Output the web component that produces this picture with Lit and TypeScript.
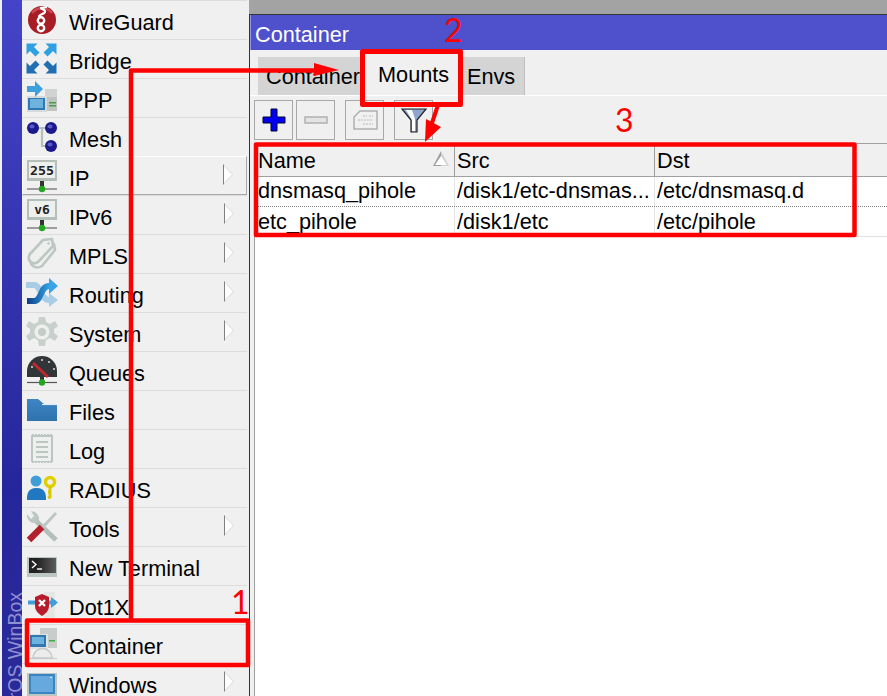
import { LitElement, html, css, svg } from "lit";
import { customElement } from "lit/decorators.js";

const bridgeQ = svg`<path d="M1.500 1.500h11l-3.500 3.500 5.500 5.500-4 4L5 9l-3.500 3.500z"/>`;

const I: Record<string, any> = {
  wg: svg`<circle cx="17" cy="17" r="14" fill="#a81c26"/><path d="M7 10a13 13 0 0 1 20 0" stroke="#cc4850" stroke-width="2.500" fill="none"/><circle cx="16" cy="17.500" r="3.200" fill="none" stroke="#fff" stroke-width="2.400"/><circle cx="16" cy="25" r="3.200" fill="none" stroke="#fff" stroke-width="2.400"/><path d="M14 14c0-3 7-3 6-6s-4-1-4-3l6-1" stroke="#fff" stroke-width="2.200" fill="none"/>`,
  bridge: svg`<g fill="#2fa0e2">${bridgeQ}<g transform="matrix(-1 0 0 1 33 0)">${bridgeQ}</g></g><g fill="#1f6fb2"><g transform="matrix(1 0 0 -1 0 33)">${bridgeQ}</g><g transform="matrix(-1 0 0 -1 33 33)">${bridgeQ}</g></g>`,
  ppp: svg`<rect x="20" y="8" width="12" height="8" fill="#d0d3d2"/><rect x="20" y="16" width="12" height="14" fill="#bfc4c2"/><rect x="24" y="21" width="7" height="1.500" fill="#4a9a4a"/><rect x="24" y="24" width="7" height="1.500" fill="#4a9a4a"/><rect x="2" y="15" width="20" height="16" fill="#d6dada"/><rect x="3" y="17" width="17" height="12" fill="#2f78b0"/><rect x="5" y="18" width="13" height="9" fill="#6eb2e0"/><path d="M2 5h8V0l8 8-8 8v-5H2z" fill="#3fa0dc"/>`,
  mesh: svg`<path d="M8 8h18M17 8v18h9" stroke="#b4bfbc" stroke-width="2.200" fill="none"/><g fill="#1a1a8c"><circle cx="8" cy="8" r="6"/><circle cx="26" cy="8" r="6"/><circle cx="26" cy="26" r="6"/></g><g fill="#5a5ac8"><ellipse cx="7" cy="6.500" rx="2.500" ry="2"/><ellipse cx="25" cy="6.500" rx="2.500" ry="2"/><ellipse cx="25" cy="24.500" rx="2.500" ry="2"/></g>`,
  ip: svg`<rect x="2" y="1" width="30" height="21" fill="#b4bfba"/><rect x="4" y="3" width="26" height="16" fill="#eef0ee"/><text x="17" y="15.500" text-anchor="middle" font-family="DejaVu Sans Mono" font-weight="700" font-size="13" textLength="24" lengthAdjust="spacingAndGlyphs" fill="#222">255</text><rect x="15" y="22" width="4" height="8" fill="#333"/><path d="M2 30h30" stroke="#666" stroke-width="1.200"/><circle cx="17" cy="30" r="3.200" fill="#22a81e"/>`,
  ipv6: svg`<rect x="2" y="1" width="30" height="21" fill="#b4bfba"/><rect x="4" y="3" width="26" height="16" fill="#eef0ee"/><text x="17" y="15.500" text-anchor="middle" font-family="DejaVu Sans Mono" font-weight="700" font-size="13" fill="#222">v6</text><rect x="15" y="22" width="4" height="8" fill="#333"/><path d="M2 30h30" stroke="#666" stroke-width="1.200"/><circle cx="17" cy="30" r="3.200" fill="#22a81e"/>`,
  mpls: svg`<g fill="#eef0ee" stroke="#bcc6c2" stroke-width="2.600" stroke-linejoin="round"><path d="M7 22 20 8l9-1 1 6-13 16q-5 3-9 0t-1-7z"/><path d="M5 17 18 3l9-1 1 7-14 15q-4 4-8 1t-1-8z"/></g><circle cx="23.500" cy="6.500" r="1.300" fill="#bcc6c2"/>`,
  routing: svg`<defs><linearGradient id="rg" x1="0" x2="1"><stop offset="0" stop-color="#0e3f86"/><stop offset="1" stop-color="#36a8ec"/></linearGradient></defs><path d="M1 9h8c7 0 6 15 15 15" stroke="#a9cde4" stroke-width="6" fill="none"/><path d="M24 17l9 7-9 7z" fill="#a9cde4"/><path d="M2 25h7c8 0 6-15 15-15h2" stroke="url(#rg)" stroke-width="6" fill="none"/><path d="M24 2l9 8-9 8z" fill="#3aa4e4"/>`,
  system: svg`<path d="M14 2h6l1 5 4 2 5-3 3 5-4 3v4l4 3-3 5-5-3-4 2-1 6h-6l-1-6-4-2-5 3-3-5 4-3v-4L1 11l3-5 5 3 4-2z" fill="#c8d0cc"/><circle cx="17" cy="17" r="7.500" fill="#eef0ee"/><circle cx="17" cy="17" r="4" fill="#c4ccc8"/>`,
  queues: svg`<path d="M2 23v-6a15 15 0 0 1 30 0v6z" fill="#333638"/><g fill="#ddd"><circle cx="7" cy="13" r="1"/><circle cx="17" cy="6" r="1"/><circle cx="24" cy="8" r="1"/><circle cx="29" cy="15" r="1"/></g><path d="M8 9l15 14" stroke="#c02830" stroke-width="3"/><rect x="15" y="23" width="4" height="5" fill="#333"/><path d="M2 28.500h30" stroke="#555" stroke-width="1.200"/><circle cx="17" cy="28.500" r="3.200" fill="#22a81e"/>`,
  files: svg`<defs><linearGradient id="fg" x1="0" x2="0" y1="0" y2="1"><stop offset="0" stop-color="#3d86c4"/><stop offset="1" stop-color="#2f72ac"/></linearGradient></defs><path d="M2 6h11l6 5h13v17H2z" fill="url(#fg)"/><path d="M17 11.500h15" stroke="#dcecf6" stroke-width="1.200"/>`,
  log: svg`<rect x="6" y="2" width="22" height="29" fill="#bcc6c2"/><rect x="8" y="5" width="18" height="24" fill="#eef0ee"/><path d="M6 2.500h22M6 30.500h22" stroke="#f0f0f0" stroke-width="1" stroke-dasharray="1 2"/><path d="M11 10h12M11 15h12M11 20h12M11 25h12" stroke="#bcc6c2" stroke-width="1.800"/>`,
  radius: svg`<circle cx="11" cy="10" r="5.500" fill="#3f9ed8"/><path d="M2 29c0-5 0-12 9.500-12s9.500 7 9.500 12z" fill="#1f78c0"/><circle cx="25" cy="11" r="4.500" fill="none" stroke="#e0d000" stroke-width="3.500"/><path d="M25 15v11l-2 1m2-6h-2" stroke="#d8c800" stroke-width="3" fill="none"/>`,
  tools: svg`<path d="M9 9 31 30" stroke="#b4bfba" stroke-width="5"/><path d="M2 4a8 8 0 0 0 9 9l3-3a8 8 0 0 0-8-9l3 5-3 3z" fill="#bcc6c2"/><path d="M31 3 17 18" stroke="#bcc6c2" stroke-width="3"/><path d="M17 17 4 30" stroke="#b4202c" stroke-width="6.500"/>`,
  term: svg`<defs><linearGradient id="tg" x1="0" x2="1"><stop offset="0.300" stop-color="#222"/><stop offset="1" stop-color="#5c5c5c"/></linearGradient></defs><rect x="2" y="8" width="30" height="20" fill="#bcc6c2"/><rect x="4" y="9" width="27" height="15" fill="url(#tg)"/><path d="M7 12l4 3.500-4 3.500" stroke="#fff" stroke-width="1.400" fill="none"/><path d="M12 20h5" stroke="#fff" stroke-width="1.400"/>`,
  dot1x: svg`<rect x="19" y="4" width="11" height="28" fill="#e4e6e4"/><path d="M3 12.500h28v4H3z" fill="#3f9ed8"/><path d="M26 9l7 5.500-7 5.500z" fill="#3f9ed8"/><path d="M10 9l7-3 7 3v9c0 5-4 8-7 10-3-2-7-5-7-10z" fill="#b81c2c"/><path d="M14 12l6 6M20 12l-6 6" stroke="#fff" stroke-width="2.400"/>`,
  container: svg`<rect x="15" y="1" width="17" height="20" fill="#c8cccb"/><rect x="4" y="7" width="19" height="15" fill="#dfe3e3"/><rect x="5" y="8" width="16" height="12" fill="#2f78b0"/><rect x="7" y="10" width="12" height="7" fill="#6eb2e0"/><rect x="24" y="13" width="6" height="1.500" fill="#3fae3f"/><path d="M2 31.500h30" stroke="#cfd3d2" stroke-width="1.500"/><path d="M8 31a9.500 9.500 0 0 1 19 0z" fill="#ececec" stroke="#c4c8c7" stroke-width="1.500"/>`,
  windows: svg`<rect x="2" y="7" width="30" height="26" fill="#bcc6c2"/><rect x="4" y="8" width="26" height="20" fill="#3a84c2"/><rect x="6" y="10" width="22" height="16" fill="#65a9de"/><circle cx="26" cy="11.500" r="0.800" fill="#fff"/>`,
};

const MENU: [string, string, boolean][] = [
  ["wg","WireGuard",false],["bridge","Bridge",false],["ppp","PPP",false],["mesh","Mesh",false],
  ["ip","IP",true],["ipv6","IPv6",true],["mpls","MPLS",true],["routing","Routing",true],
  ["system","System",true],["queues","Queues",false],["files","Files",false],["log","Log",false],
  ["radius","RADIUS",false],["tools","Tools",true],["term","New Terminal",false],["dot1x","Dot1X",false],
  ["container","Container",false],["windows","Windows",true],
];

@customElement("app-root")
export class AppRoot extends LitElement {
  static styles = css`
    :host { display: block; width: 887px; height: 696px; overflow: hidden; position: relative;
      font-family: "Liberation Sans", Arial, sans-serif; font-size: 21.7px; color: #000; background: #f0f0f0; }
    .page { display: flex; height: 696px; }
    .edge { width: 2px; background: #f0f0f0; flex: none; }
    .rail { width: 20px; flex: none; background: linear-gradient(#4444c8, #26269c 70%, #2a2a9a); position: relative; overflow: hidden; }
    .brand { position: absolute; left: 4px; bottom: -55px; writing-mode: vertical-rl; transform: rotate(180deg);
      color: #9090d0; font-size: 19.500px; line-height: 18px; white-space: nowrap; }
    .menu { width: 227px; flex: none; background: #f0f0f0; }
    .row { height: 39px; box-sizing: border-box; border-top: 1px solid #dcdcdc; margin-right: 2px; display: flex; align-items: center; position: relative; }
    .row.hover { border: 1px solid #a8a8a8; border-top-color: #fff; border-left-color: #fff; }
    .row svg { width: 34px; height: 34px; margin-left: 3px; flex: none; }
    .row span { margin-left: 10px; margin-top: 5px; }
    .row.hover span { margin-top: 7px; }
    .row.hover svg { margin-left: 2px; }
    .caret { position: absolute; right: 13px; top: 7px; width: 10px; height: 21px; }
    .caret::before { content: ""; position: absolute; inset: 0; background: linear-gradient(to right, #808080 1px, #d8d8d8 1px); clip-path: polygon(0 0, 100% 50%, 0 100%); }
    .caret::after { content: ""; position: absolute; left: 1px; top: 2px; width: 8px; height: 17px; background: #fff; clip-path: polygon(0 0, 100% 50%, 0 100%); }
    .main { flex: 1; min-width: 0; display: flex; flex-direction: column; }
    .desk { height: 15px; background: #a3a3a3; border-bottom: 1px solid #333; box-sizing: border-box; flex: none; }
    .win { flex: 1; display: flex; flex-direction: column; border-left: 1px solid #333; background: #f0f0f0; }
    .title { height: 35px; flex: none; background: #4f50cc; color: #fff; padding: 5px 0 0 4px; display: flex; align-items: center; box-sizing: border-box; border-left: 1px solid #9898e0; }
    .tabs { height: 46px; flex: none; display: flex; align-items: flex-end; padding-left: 8px; border-bottom: 1px solid #fff; box-sizing: border-box; }
    .tab { height: 38px; background: #d4d4d4; box-sizing: border-box; display: flex; align-items: center; border-right: 1px solid #c0c0c0; }
    .tab.a { width: 107px; padding-left: 8px; padding-top: 1px; }
    .tab.b { width: 96px; height: 45px; background: #f0f0f0; padding: 5px 0 0 13px; border: 0; }
    .tab.c { width: 64px; padding-left: 6px; padding-top: 1px; }
    .tools { height: 47px; flex: none; display: flex; gap: 3px; padding: 4px 0 0 4px; box-sizing: border-box; }
    .btn { width: 39px; height: 40px; box-sizing: border-box; border: 1px solid #a8a8a8; display: flex; align-items: center; justify-content: center; }
    .btn svg { width: 28px; height: 28px; }
    .btn.gap { margin-left: 7px; }
    .table { flex: 1; background: #fff; margin-left: 4px; display: flex; flex-direction: column; border-left: 1px solid #a0a0a0; }
    .tr { display: grid; grid-template-columns: 200px 200px 1fr; height: 30px; box-sizing: border-box; }
    .tr.head { height: 34px; background: #f0f0f0; border-top: 1px solid #a0a0a0; border-bottom: 1px solid #a0a0a0; }
    .tr.head div { border-right: 1px solid #a0a0a0; padding-top: 2px; }
    .tr.r1 { border-bottom: 1px dotted #808080; }
    .tr.r1 div { padding-bottom: 1px; }
    .tr.r2 { border-bottom: 1px solid #e0e0e0; }
    .tr div { padding-left: 2px; display: flex; align-items: center; white-space: nowrap; overflow: hidden; position: relative; border-right: 1px solid #e4e4e4; box-sizing: border-box; }
    .tr div:first-child { padding-left: 3px; }
    .tr div:last-child, .tr.head div:last-child { border-right: 0; }
    .sort { position: absolute; right: 5px; top: 7px; width: 16px; height: 15px; background: linear-gradient(to right, #a0a0a0 50%, #d0d0d0 50%); clip-path: polygon(50% 0, 100% 100%, 0 100%); }
    .sort::after { content: ""; position: absolute; left: 2px; top: 5px; width: 12px; height: 9px; background: #fff; clip-path: polygon(50% 0, 100% 100%, 0 100%); }
    .anno { position: absolute; inset: 0; pointer-events: none; }
    .anno svg { position: absolute; inset: 0; width: 887px; height: 696px; }
    .num { position: absolute; color: #f00; font-family: "Lato", sans-serif; font-size: 32px; line-height: 32px; }
    .n1 { left: 231px; top: 586px; }
    .n2 { left: 444px; top: 14px; }
    .n3 { left: 615px; top: 104px; }
  `;

  render() {
    return html`
      <div class="page">
        <div class="edge"></div>
        <div class="rail"><div class="brand">RouterOS WinBox</div></div>
        <div class="menu">
          ${MENU.map(([ic, label, sub]) => html`
            <div class="row ${label === "IP" ? "hover" : ""}">
              <svg viewBox="0 0 34 34">${I[ic]}</svg><span>${label}</span>
              ${sub ? html`<i class="caret"></i>` : ""}
            </div>`)}
        </div>
        <div class="main">
          <div class="desk"></div>
          <div class="win">
            <div class="title">Container</div>
            <div class="tabs">
              <div class="tab a">Container</div>
              <div class="tab b">Mounts</div>
              <div class="tab c">Envs</div>
            </div>
            <div class="tools">
              <div class="btn"><svg viewBox="0 0 28 28"><path d="M11 3h6v8h8v6h-8v8h-6v-8H3v-6h8z" fill="#0000f0" stroke="#000030" stroke-width="1"/></svg></div>
              <div class="btn"><svg viewBox="0 0 28 28"><rect x="3" y="11" width="22" height="6" fill="#e4e4e4" stroke="#b0b0b0" stroke-width="1.500"/></svg></div>
              <div class="btn gap"><svg viewBox="0 0 28 28"><path d="M3 11l6-6h17v18H3z" fill="#f0f0f0" stroke="#b0b0b0" stroke-width="1.500"/><path d="M12 10h4M18 10h4M7 14h15M12 18h10" stroke="#b8b8b8" stroke-width="1.200" stroke-dasharray="2 1"/></svg></div>
              <div class="btn gap"><svg viewBox="0 0 28 28"><path d="M2 3h24L17 14v12h-6V14z" fill="#8fa6cc" stroke="#222" stroke-width="1.200"/><path d="M6 4h6l3 9v12h-3V14z" fill="#fff"/></svg></div>
            </div>
            <div class="table">
              <div class="tr head"><div>Name<i class="sort"></i></div><div>Src</div><div>Dst</div></div>
              <div class="tr r1"><div>dnsmasq_pihole</div><div>/disk1/etc-dnsmas...</div><div>/etc/dnsmasq.d</div></div>
              <div class="tr r2"><div>etc_pihole</div><div>/disk1/etc</div><div>/etc/pihole</div></div>
            </div>
          </div>
        </div>
      </div>
      <div class="anno">
        <svg viewBox="0 0 887 696" fill="none" stroke="#f00" stroke-width="4.500" stroke-linejoin="round">
          <rect x="27" y="620.500" width="221" height="44.500"/>
          <path d="M131 620V70.500h190"/>
          <path d="M314 63l25 7-25 6z" fill="#f00" stroke="none"/>
          <rect x="362.500" y="51.500" width="98" height="53" stroke-width="5"/>
          <path d="M438 105l-6 18" stroke-width="4"/>
          <path d="M425 142l1-23 15 8z" fill="#f00" stroke="none"/>
          <rect x="256" y="144.500" width="598.500" height="90.500"/>
        </svg>
        <div class="num n1">1</div>
        <div class="num n2">2</div>
        <div class="num n3">3</div>
      </div>
    `;
  }
}
